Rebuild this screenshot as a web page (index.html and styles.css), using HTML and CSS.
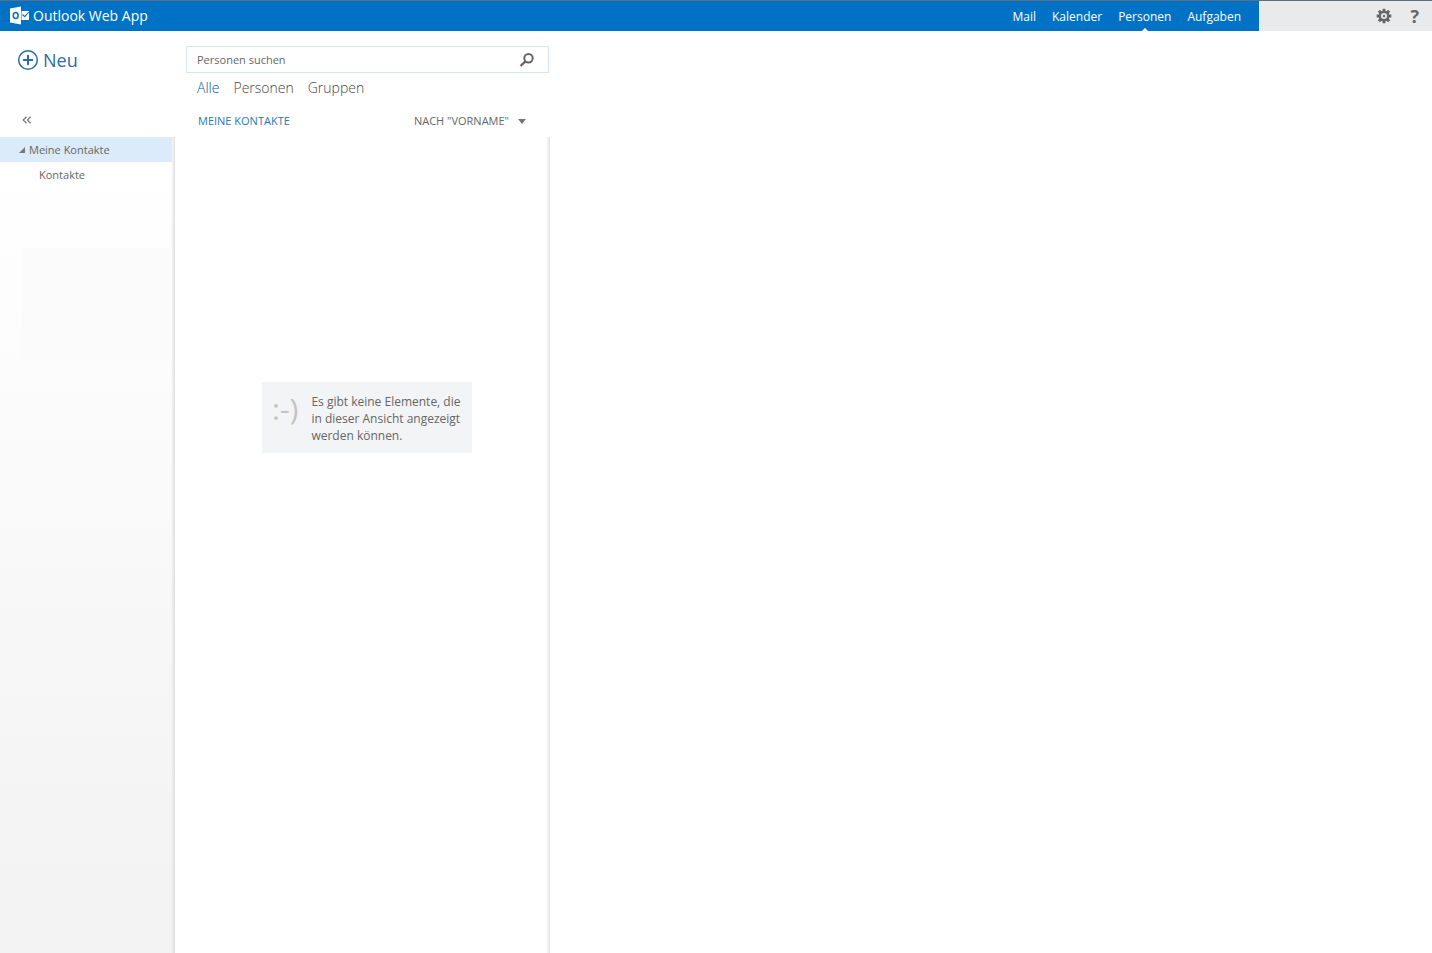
FILE: index.html
```html
<!DOCTYPE html>
<html lang="de">
<head>
    <meta charset="UTF-8">
    <meta name="viewport" content="width=device-width, initial-scale=1.0">
    <title>Personen - Outlook Web App</title>
    <link rel="stylesheet" href="styles.css">
</head>
<body>
    <header class="topbar">
        <a class="brand" href="#">
            <svg class="brand-logo" width="20" height="20" viewBox="0 0 20 20" aria-hidden="true">
                <path fill="#fff" d="M0 2.500 11 .5v18L0 16.500z"/>
                <path fill="#fff" d="M11.500 5H19v9h-7.500z"/>
                <path fill="none" stroke="#0072c6" stroke-width="1.100" d="m12.500 8.500 2.200 2.200L18.800 6"/>
                <ellipse cx="5.700" cy="9.500" rx="2.400" ry="3" fill="none" stroke="#0072c6" stroke-width="1.500"/>
            </svg>
            <span>Outlook Web App</span>
        </a>
        <nav class="main-nav">
            <a href="#">Mail</a>
            <a href="#">Kalender</a>
            <a href="#" class="active">Personen</a>
            <a href="#">Aufgaben</a>
        </nav>
        <div class="tools">
            <button type="button" aria-label="Einstellungen">
                <svg width="16" height="16" viewBox="0 0 16 16">
                    <g stroke="#666" stroke-width="2.800">
                        <path d="M8 .7v14.600M.7 8h14.600M2.800 2.800l10.400 10.400M13.200 2.800 2.800 13.200"/>
                    </g>
                    <circle cx="8" cy="8" r="5.500" fill="#666"/>
                    <circle cx="8" cy="8" r="3" fill="#e9eaec"/>
                    <circle cx="8" cy="8" r="1.200" fill="#666"/>
                </svg>
            </button>
            <button type="button" class="help-btn" aria-label="Hilfe">?</button>
        </div>
    </header>

    <main class="layout">
        <aside class="sidebar">
            <div class="sidebar-head">
                <button type="button" class="new-btn">
                    <svg width="22" height="22" viewBox="0 0 22 22" aria-hidden="true">
                        <circle cx="11" cy="11" r="9.300" fill="none" stroke="#2a6da8" stroke-width="1.500"/>
                        <path d="M11 6v10M6 11h10" stroke="#2a6da8" stroke-width="2"/>
                    </svg>
                    <span>Neu</span>
                </button>
                <button type="button" class="collapse-btn" aria-label="Ordnerbereich reduzieren">
                    <svg width="10" height="8" viewBox="0 0 10 8">
                        <path d="M4.500.8 1.200 4l3.300 3.200M8.700.8 5.400 4l3.300 3.200" fill="none" stroke="#777" stroke-width="1.200"/>
                    </svg>
                </button>
            </div>
            <nav class="folders">
                <a href="#" class="folder selected">
                    <svg width="7" height="7" viewBox="0 0 7 7" aria-hidden="true">
                        <path d="M7 1v6H1z" fill="#777"/>
                    </svg>
                    <span>Meine Kontakte</span>
                </a>
                <a href="#" class="folder child">Kontakte</a>
                <div class="folder-space"></div>
            </nav>
        </aside>

        <section class="contacts">
            <div class="contacts-head">
                <form class="search">
                    <input type="search" placeholder="Personen suchen" aria-label="Personen suchen">
                    <button type="submit" aria-label="Suchen">
                        <svg width="16" height="16" viewBox="0 0 16 16">
                            <circle cx="9.500" cy="6.200" r="4.200" fill="none" stroke="#666" stroke-width="2"/>
                            <path d="M6.500 9.300 1.500 14" stroke="#666" stroke-width="2.300"/>
                        </svg>
                    </button>
                </form>
                <div class="filters">
                    <button type="button" class="active">Alle</button>
                    <button type="button">Personen</button>
                    <button type="button">Gruppen</button>
                </div>
                <div class="list-head">
                    <h2>MEINE KONTAKTE</h2>
                    <button type="button" class="sort-btn">
                        <span>NACH "VORNAME"</span>
                        <svg width="8" height="5" viewBox="0 0 8 5" aria-hidden="true">
                            <path d="M0 0h8L4 5z" fill="#777"/>
                        </svg>
                    </button>
                </div>
            </div>
            <div class="contact-list">
                <div class="empty">
                    <span class="smiley">:-)</span>
                    <p>Es gibt keine Elemente, die in dieser Ansicht angezeigt werden können.</p>
                </div>
            </div>
        </section>

        <section class="details"></section>
    </main>
</body>
</html>
```
FILE: styles.css
```css
* {
    box-sizing: border-box;
}
body {
    margin: 0;
    min-height: 100vh;
    display: flex;
    flex-direction: column;
    font-family: 'Segoe UI', 'Open Sans', 'Noto Sans', sans-serif;
    font-size: 12px;
    color: #666;
    background-color: #fff;
}
a {
    color: inherit;
    text-decoration: none;
}
button {
    padding: 0;
    border: none;
    background: none;
    font: inherit;
    color: inherit;
    cursor: pointer;
}
svg {
    display: block;
    flex-shrink: 0;
}

.topbar {
    display: flex;
    height: 31px;
    border-top: 1px solid #5f6f80;
    background-color: #0072c6;
    color: #fff;
}
.brand {
    display: flex;
    align-items: center;
    gap: 3px;
    padding-left: 10px;
    font-size: 14px;
    line-height: 30px;
}
.main-nav {
    display: flex;
    gap: 16px;
    margin-left: auto;
    padding-right: 18px;
    line-height: 32px;
}
.main-nav a {
    position: relative;
}
.main-nav .active::after {
    content: "";
    position: absolute;
    bottom: 0;
    left: 50%;
    margin-left: -3px;
    border: 3px solid transparent;
    border-top: none;
    border-bottom-color: #fff;
}
.tools {
    display: flex;
    align-items: center;
    justify-content: flex-end;
    gap: 18px;
    width: 173px;
    padding-right: 13px;
    background-color: #e9eaec;
    color: #666;
}
.help-btn {
    font-size: 18px;
    font-weight: bold;
    line-height: 30px;
}

.layout {
    flex: 1;
    display: grid;
    grid-template-columns: 175px 375px 1fr;
}
.sidebar,
.contacts {
    display: flex;
    flex-direction: column;
}
.sidebar-head,
.contacts-head {
    height: 106px;
}
.sidebar-head {
    display: flex;
    flex-direction: column;
    align-items: flex-start;
    justify-content: space-between;
    padding: 15px 0 13px 17px;
}
.new-btn {
    display: flex;
    align-items: center;
    gap: 4px;
    font-size: 18px;
    line-height: 28px;
    color: #2a6da8;
}
.collapse-btn {
    padding-left: 5px;
}
.folders {
    flex: 1;
    background: linear-gradient(to left, #dedede, rgba(222, 222, 222, 0) 4px), linear-gradient(#fff, #fdfdfd 20%, #f3f3f3 90%);
}
.folder {
    display: flex;
    align-items: center;
    gap: 4px;
    height: 25px;
    margin-right: 3px;
    padding-left: 18px;
    font-size: 11px;
}
.folder.selected {
    background-color: #dcebf9;
}
.folder.child {
    padding-left: 39px;
}
.folder-space {
    height: 112px;
    margin: 61px 3px 0 21px;
    background-color: #fbfbfb;
}

.contacts-head {
    padding: 15px 1px 0 11px;
}
.search {
    display: flex;
    align-items: center;
    height: 27px;
    padding-right: 13px;
    border: 1px solid #d7e7f0;
}
.search input {
    flex: 1;
    min-width: 0;
    padding: 0 0 0 10px;
    border: none;
    outline: none;
    background: none;
    font: inherit;
    font-size: 11px;
    color: #666;
}
.search input::placeholder {
    color: #666;
}
.filters {
    display: flex;
    gap: 14px;
    padding-left: 11px;
    font-size: 14px;
    font-weight: 300;
    line-height: 30px;
    color: #444;
}
.filters .active {
    color: #005a9e;
}
.list-head {
    display: flex;
    align-items: center;
    justify-content: space-between;
    padding: 8px 23px 0 12px;
    font-size: 11px;
    line-height: 20px;
}
.list-head h2 {
    margin: 0;
    font-size: 11px;
    font-weight: normal;
    color: #2a7ab8;
}
.sort-btn {
    display: flex;
    align-items: center;
    gap: 9px;
}
.contact-list {
    flex: 1;
    padding: 245px 78px 0 87px;
    background: linear-gradient(to left, #e2e2e2, rgba(226, 226, 226, 0) 4px);
}
.empty {
    display: flex;
    gap: 13px;
    padding: 11px 7px 9px 10px;
    background-color: #f3f4f6;
}
.empty p {
    margin: 0;
    line-height: 17px;
}
.smiley {
    font-size: 30px;
    line-height: 32px;
    color: #c4c4c4;
}
```
